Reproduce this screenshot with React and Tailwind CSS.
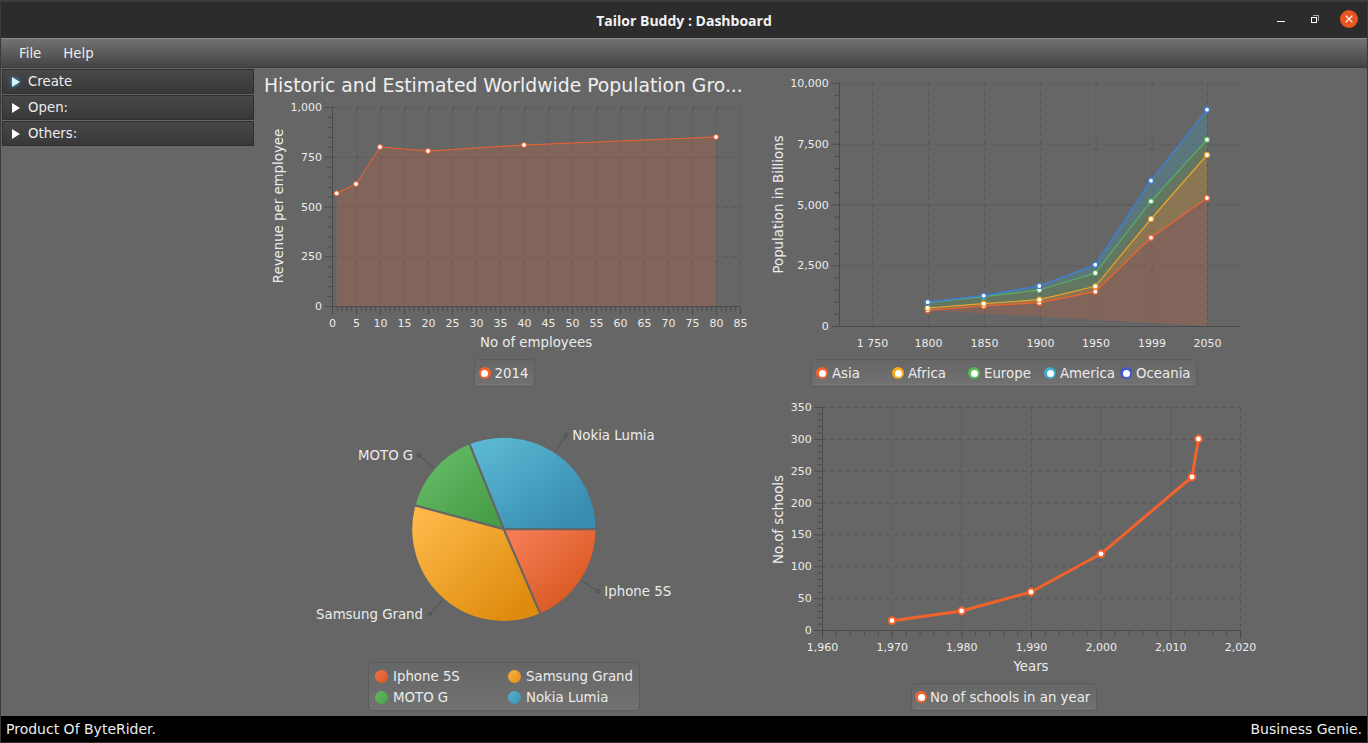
import React from 'react';
import { X } from 'lucide-react';

const ORANGE = '#f3622d';
const series = [
  { name: 'Asia', color: '#f3622d', line: '#f3622d', band: '#f3622d', alpha: 0.2, pts: [[927.7, 310.3], [983.7, 306], [1039.3, 302.7], [1095.3, 291.7], [1151, 237.7], [1207, 198]] },
  { name: 'Africa', color: '#fba71b', line: '#eba52c', band: '#fba71b', alpha: 0.25, pts: [[927.7, 308], [983.7, 303.7], [1039.3, 299.7], [1095.3, 286.3], [1151, 219], [1207, 155]] },
  { name: 'Europe', color: '#57b757', line: '#57b35f', band: '#57b757', alpha: 0.2, pts: [[927.7, 302.6], [983.7, 296.7], [1039.3, 290], [1095.3, 273], [1151, 201.3], [1207, 139.7]] },
  { name: 'America', color: '#41a9c9', line: '#41a9c9', band: '#41a9c9', alpha: 0.25, pts: [[927.7, 302.2], [983.7, 295.7], [1039.3, 286], [1095.3, 264.7], [1151, 180.7], [1207, 109.7]] },
  { name: 'Oceania', color: '#4258c9', line: '#3f74d2', pts: [[927.7, 302.2], [983.7, 295.7], [1039.3, 286], [1095.3, 264.7], [1151, 180.7], [1207, 109.7]] },
];

const revenue = [[336.7, 193.3], [356, 184], [380, 147], [428, 151], [524, 145], [716, 137]];
const schools = [[892, 620.7], [961.6, 611], [1031, 592], [1101, 553.8], [1192, 477], [1198.5, 439]];

const AXIS = '#4b4b4b';
const GRID = '#575757';
const LABEL = '#ececec';

const toPts = (pts) => pts.map((p) => p.join(',')).join(' ');

function range(n) {
  return Array.from({ length: n }, (_, i) => i);
}

function TickText({ x, y, anchor = 'middle', children }) {
  return (
    <text x={x} y={y} textAnchor={anchor} dominantBaseline="central" fontSize="11" fill={LABEL}>
      {children}
    </text>
  );
}

function AxisTitle({ x, y, rotate, children }) {
  return (
    <text
      x={x}
      y={y}
      textAnchor="middle"
      dominantBaseline="central"
      fontSize="13.33"
      fill={LABEL}
      transform={rotate ? `rotate(-90 ${x} ${y})` : undefined}
    >
      {children}
    </text>
  );
}

// plot frame: dashed grid plus y axis (and x axis ticks when xMinor is set)
function Frame({ l, r, t, b, yMajors, yLabels, yMinor, xMajors, xLabels, xMinor, labelY, labelRight }) {
  const yStep = (b - t) / yMajors;
  const xs = xMajors;
  return (
    <g>
      {range(yMajors).map((i) => (
        <line key={i} x1={l} x2={r} y1={t + i * yStep} y2={t + i * yStep} stroke={GRID} strokeDasharray="4 4" />
      ))}
      {xs.map((x) => (
        <line key={x} x1={x} x2={x} y1={t} y2={b} stroke={GRID} strokeDasharray="4 4" />
      ))}
      <line x1={l} x2={l} y1={t} y2={b} stroke={AXIS} />
      <line x1={l} x2={r} y1={b} y2={b} stroke={AXIS} />
      {range(yMajors + 1).map((i) => (
        <g key={i}>
          <line x1={l - 8} x2={l} y1={t + i * yStep} y2={t + i * yStep} stroke={AXIS} />
          <TickText x={labelRight} y={t + i * yStep} anchor="end">{yLabels[i]}</TickText>
          {i < yMajors &&
            range(yMinor).map((m) => {
              const y = t + i * yStep + ((m + 1) * yStep) / (yMinor + 1);
              return <line key={m} x1={l - 5} x2={l} y1={y} y2={y} stroke={AXIS} />;
            })}
        </g>
      ))}
      {xLabels.map((label, i) => (
        <g key={label}>
          {xMinor > 0 && <line x1={xs[i]} x2={xs[i]} y1={b} y2={b + 8} stroke={AXIS} />}
          <TickText x={xs[i]} y={labelY}>{label}</TickText>
          {xMinor > 0 && i < xs.length - 1 &&
            range(xMinor).map((m) => {
              const x = xs[i] + ((m + 1) * (xs[i + 1] - xs[i])) / (xMinor + 1);
              return <line key={m} x1={x} x2={x} y1={b} y2={b + 5} stroke={AXIS} />;
            })}
        </g>
      ))}
    </g>
  );
}

function Dot({ p, color, r = 2.4, w = 1 }) {
  return <circle cx={p[0]} cy={p[1]} r={r} fill="#ffffff" stroke={color} strokeWidth={w} />;
}

function RevenueChart() {
  const xs = range(18).map((i) => 332.5 + i * 24);
  const xl = range(18).map((i) => String(i * 5));
  return (
    <svg viewBox="254 98 500 258" width="500" height="258" className="block flex-none overflow-visible">
      <Frame l={332.5} r={740.5} t={107.5} b={306.5} yMajors={4} yMinor={4} yLabels={['1,000', '750', '500', '250', '0']}
        xMajors={xs} xLabels={xl} xMinor={4} labelY={323} labelRight={322} />
      <polygon points={`${toPts(revenue)} 716,306 336.7,306`} fill={ORANGE} fillOpacity="0.2" />
      <polyline points={toPts(revenue)} fill="none" stroke={ORANGE} />
      {revenue.map((p) => <Dot key={p[0]} p={p} color={ORANGE} />)}
      <AxisTitle x={278} y={206} rotate>Revenue per employee</AxisTitle>
      <AxisTitle x={536} y={342}>No of employees</AxisTitle>
    </svg>
  );
}

// each band only fills down to the series under it; the lowest one closes on the 2050 baseline
function bandPoints(i) {
  const top = series[i].pts;
  if (i === 0) return `${toPts(top)} 1207,326`;
  return `${toPts(top)} ${toPts([...series[i - 1].pts].reverse())}`;
}

function PopulationChart() {
  const xs = [872.5, 928.5, 984.5, 1040.5, 1096, 1152, 1207.5];
  return (
    <svg viewBox="754 68 500 288" width="500" height="288" className="block flex-none overflow-visible">
      <Frame l={839.5} r={1240} t={83.5} b={326.5} yMajors={4} yMinor={4} yLabels={['10,000', '7,500', '5,000', '2,500', '0']}
        xMajors={xs} xLabels={['1 750', '1800', '1850', '1900', '1950', '1999', '2050']} xMinor={0} labelY={343} labelRight={828.7} />
      {series.map((s, i) => s.band && (
        <polygon key={s.name} points={bandPoints(i)} fill={s.band} fillOpacity={s.alpha} />
      ))}
      {series.map((s) => (
        <polyline key={s.name} points={toPts(s.pts)} fill="none" stroke={s.line} strokeWidth="1.2" />
      ))}
      {series.map((s) => s.pts.map((p) => <Dot key={s.name + p[0]} p={p} color={s.line} r={2.5} w={1.2} />))}
      <AxisTitle x={778} y={204.5} rotate>Population in Billions</AxisTitle>
    </svg>
  );
}

function polar(cx, cy, r, deg) {
  const a = (deg * Math.PI) / 180;
  return [cx + r * Math.cos(a), cy - r * Math.sin(a)];
}

function slicePath(from, to) {
  const [cx, cy, r] = [503.9, 529.3, 92.6];
  const [x1, y1] = polar(cx, cy, r, from);
  const [x2, y2] = polar(cx, cy, r, to);
  return `M${cx} ${cy}L${x1} ${y1}A${r} ${r} 0 ${to - from > 180 ? 1 : 0} 0 ${x2} ${y2}Z`;
}

const slices = [
  { id: 'nokia', from: 0, to: 112, c1: '#5ab7d3', c2: '#388db0' },
  { id: 'moto', from: 112, to: 165, c1: '#68bd68', c2: '#479e47' },
  { id: 'samsung', from: 165, to: 293.4, c1: '#fdb747', c2: '#de8c0e' },
  { id: 'iphone', from: 293.4, to: 360, c1: '#f47b54', c2: '#d7561c' },
];

const pieLabels = [
  { text: 'Nokia Lumia', line: [555, 452.3, 566, 435.3], x: 572.3, y: 435 },
  { text: 'MOTO G', line: [434, 468, 419, 455], x: 358, y: 455 },
  { text: 'Samsung Grand', line: [443.3, 599, 429.7, 614.3], x: 316, y: 614 },
  { text: 'Iphone 5S', line: [581.7, 580.7, 598, 591.3], x: 604.3, y: 591 },
];

function PieChart() {
  return (
    <svg viewBox="254 392 500 267" width="500" height="267" className="block flex-none overflow-visible">
      <defs>
        {slices.map((s) => (
          <linearGradient key={s.id} id={s.id} x1="0" y1="0" x2="1" y2="1">
            <stop offset="0.1" stopColor={s.c1} />
            <stop offset="0.85" stopColor={s.c2} />
          </linearGradient>
        ))}
      </defs>
      {slices.map((s) => (
        <path key={s.id} d={slicePath(s.from, s.to)} fill={`url(#${s.id})`} stroke="#666666" strokeWidth="2" strokeLinejoin="round" />
      ))}
      {pieLabels.map((l) => (
        <g key={l.text}>
          <line x1={l.line[0]} y1={l.line[1]} x2={l.line[2]} y2={l.line[3]} stroke="#4f4f4f" />
          <circle cx={l.line[2]} cy={l.line[3]} r="1.8" fill="none" stroke="#4f4f4f" />
          <text x={l.x} y={l.y} dominantBaseline="central" fontSize="13.33" fill={LABEL}>{l.text}</text>
        </g>
      ))}
    </svg>
  );
}

function SchoolsChart() {
  const xs = range(7).map((i) => 822.5 + i * 69.67);
  return (
    <svg viewBox="754 392 500 288" width="500" height="288" className="block flex-none overflow-visible">
      <Frame l={822.5} r={1240.5} t={407.5} b={630.5} yMajors={7} yMinor={4}
        yLabels={['350', '300', '250', '200', '150', '100', '50', '0']}
        xMajors={xs} xLabels={['1,960', '1,970', '1,980', '1,990', '2,000', '2,010', '2,020']} xMinor={4} labelY={647} labelRight={811.7} />
      <polyline points={toPts(schools)} fill="none" stroke={ORANGE} strokeWidth="3" strokeLinejoin="round" />
      {schools.map((p) => <Dot key={p[0]} p={p} color={ORANGE} r={3.4} w={2} />)}
      <AxisTitle x={778} y={519.5} rotate>No.of schools</AxisTitle>
      <AxisTitle x={1031} y={666}>Years</AxisTitle>
    </svg>
  );
}

function LegendBox({ className, children }) {
  return (
    <div className={`mt-[3px] flex-none rounded-[4px] border border-[#5c5c5c] bg-gradient-to-b from-[#666666] to-[#727272] pt-[1px] text-[13.33px] text-[#ececec] ${className}`}>
      {children}
    </div>
  );
}

function LegendDot({ color }) {
  return (
    <span className="flex h-3 w-3 flex-none items-center justify-center rounded-full" style={{ backgroundColor: color }}>
      <span className="h-[7px] w-[7px] rounded-full bg-white" />
    </span>
  );
}

function LegendItem({ color, gap = 'gap-[4px]', children }) {
  return (
    <div className={`flex items-center ${gap}`}>
      <LegendDot color={color} />
      <span className="whitespace-nowrap">{children}</span>
    </div>
  );
}

function PieKey({ from, to, children }) {
  return (
    <div className="flex items-center gap-[5px]">
      <span className={`h-[13px] w-[13px] flex-none rounded-full bg-gradient-to-br ${from} ${to}`} />
      <span className="whitespace-nowrap">{children}</span>
    </div>
  );
}

function SideItem({ label, active }) {
  return (
    <div className="mb-[1px] flex h-[25px] items-center gap-[8px] border border-[#2f2f2f] bg-gradient-to-b from-[#484848] to-[#383838] pl-[9px] text-[13.33px] text-[#ececec]">
      <span className={`h-0 w-0 border-y-[5px] border-l-[8px] border-y-transparent ${active ? 'border-l-[#d8f4ff] drop-shadow-[0_0_2px_#2fb4ea]' : 'border-l-white'}`} />
      {label}
    </div>
  );
}

export default function App() {
  return (
    <div className="flex h-screen w-full flex-col overflow-hidden border-x border-[#3a3a3a] bg-[#666666] font-['DejaVu_Sans',sans-serif]">
      {/* title bar */}
      <div className="relative flex h-[38px] flex-none items-center justify-center border-t-2 border-[#3c3c3c] bg-[#2c2c2c]">
        <span className="font-['Open_Sans',sans-serif] text-[14px] font-bold text-[#f2f2f2]">Tailor Buddy : Dashboard</span>
        <div className="absolute right-[9px] top-[8px] flex items-start">
          <span className="mr-[26px] mt-[11px] h-[1px] w-[8px] bg-white" />
          <svg width="8" height="8" viewBox="0 0 8 8" className="mr-[21px] mt-[5px]" fill="none">
            <path d="M2 .5h5.5V6" stroke="#a8a8a8" />
            <rect x=".5" y="2.5" width="5" height="5" stroke="#ffffff" />
          </svg>
          <span className="flex h-[18px] w-[18px] items-center justify-center rounded-full bg-[#e95420]">
            <X size={12} strokeWidth={2.2} className="text-white" />
          </span>
        </div>
      </div>

      {/* menu bar */}
      <div className="flex h-[30px] flex-none items-center gap-[22px] border-t border-b border-t-[#8b8b8b] border-b-[#3a3a3a] bg-gradient-to-b from-[#727272] to-[#444444] pl-[18px] pt-[1px] text-[13.33px] text-[#ececec]">
        <span>File</span>
        <span>Help</span>
      </div>

      <div className="flex min-h-0 flex-1">
        <div className="w-[253px] flex-none pl-[1px] pt-[1px]">
          <SideItem label="Create" active />
          <SideItem label="Open:" />
          <SideItem label="Others:" />
        </div>

        <div className="grid grid-cols-[500px_500px] grid-rows-[324px_324px]">
          <div className="flex flex-col items-center">
            <h1 className="h-[30px] w-full flex-none truncate pl-[10px] pt-[4px] text-[18.8px] font-normal leading-[28px] text-[#f0f0f0]">
              Historic and Estimated Worldwide Population Gro...
            </h1>
            <RevenueChart />
            <LegendBox className="flex h-[28px] w-[61px] items-center pl-[4px]">
              <LegendItem color={ORANGE}>2014</LegendItem>
            </LegendBox>
          </div>

          <div className="flex flex-col items-center">
            <PopulationChart />
            <LegendBox className="grid h-[28px] w-[386px] grid-cols-[76px_76px_76px_76px_76px] items-center pl-[4px]">
              {series.map((s) => (
                <LegendItem key={s.name} color={s.color}>{s.name}</LegendItem>
              ))}
            </LegendBox>
          </div>

          <div className="flex flex-col items-center">
            <PieChart />
            <LegendBox className="grid h-[49px] w-[272px] grid-cols-[133px_1fr] content-center items-center gap-y-[1px] pl-[6px]">
              <PieKey from="from-[#f0754c]" to="to-[#d9561e]">Iphone 5S</PieKey>
              <PieKey from="from-[#fbb340]" to="to-[#e08e10]">Samsung Grand</PieKey>
              <PieKey from="from-[#64ba64]" to="to-[#48a048]">MOTO G</PieKey>
              <PieKey from="from-[#58b4d0]" to="to-[#3a90b0]">Nokia Lumia</PieKey>
            </LegendBox>
          </div>

          <div className="flex flex-col items-center">
            <SchoolsChart />
            <LegendBox className="flex h-[28px] w-[186px] items-center pl-[3px]">
              <LegendItem color={ORANGE} gap="gap-[3px]">No of schools in an year</LegendItem>
            </LegendBox>
          </div>
        </div>
      </div>

      {/* status bar */}
      <div className="flex h-[27px] flex-none items-center justify-between border-b border-[#2c2c2c] bg-black px-[5px] text-[14px] text-[#ececec]">
        <span>Product Of ByteRider.</span>
        <span>Business Genie.</span>
      </div>
    </div>
  );
}
